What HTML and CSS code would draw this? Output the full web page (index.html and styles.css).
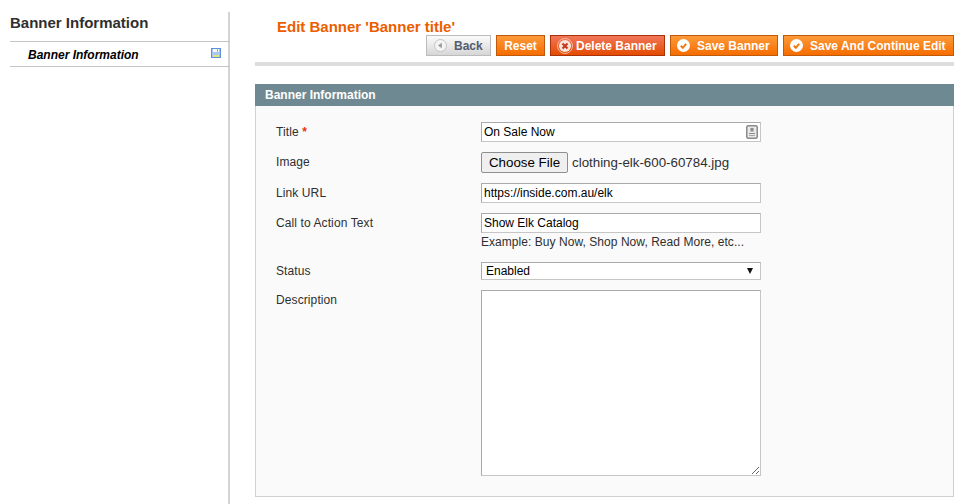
FILE: index.html

```html
<!DOCTYPE html>
<html lang="en">
<head>
  <meta charset="UTF-8">
  <title>Edit Banner</title>
  <link rel="stylesheet" href="styles.css">
</head>
<body>
  <div class="page">
    <aside class="side">
      <h3 class="side-title">Banner Information</h3>
      <div class="side-item">
        <span>Banner Information</span>
        <svg class="save-icon" width="10" height="10" viewBox="0 0 10 10">
          <rect x="0.5" y="0.5" width="9" height="9" fill="#a9c6ee" stroke="#5f8fd6"/>
          <rect x="2" y="1" width="6" height="3" fill="#f4f8fc"/>
          <rect x="6" y="1.5" width="1" height="2" fill="#5f8fd6"/>
          <rect x="2" y="7" width="6" height="2" fill="#dbe67e"/>
        </svg>
      </div>
    </aside>

    <main class="content">
      <div class="head">
        <h3 class="head-title">Edit Banner 'Banner title'</h3>
        <div class="actions">
          <button class="btn btn-back" type="button">
            <svg class="ico" width="13" height="13" viewBox="0 0 13 13">
              <circle cx="6.5" cy="6.5" r="6" fill="#f4f4f4" stroke="#c4c4c4"/>
              <path d="M7.8 3.8v5.4L4 6.5z" fill="#9a9a9a"/>
            </svg>
            <span>Back</span>
          </button>
          <button class="btn btn-orange btn-reset" type="button">Reset</button>
          <button class="btn btn-red" type="button">
            <svg class="ico" width="16" height="16" viewBox="0 0 16 16">
              <circle cx="8" cy="8" r="7.5" fill="none" stroke="#f7b9a0"/>
              <circle cx="8" cy="8" r="6" fill="#f8e6de"/>
              <path d="M5.5 5.5l5 5M10.5 5.5l-5 5" stroke="#c6391a" stroke-width="2.2"/>
            </svg>
            <span>Delete Banner</span>
          </button>
          <button class="btn btn-orange btn-save btn-save-short" type="button">
            <svg class="ico" width="13" height="13" viewBox="0 0 13 13">
              <circle cx="6.5" cy="6.5" r="6.5" fill="#fff"/>
              <path d="M3.8 6.8l2 2 3.4-4" fill="none" stroke="#f07a10" stroke-width="2"/>
            </svg>
            <span>Save Banner</span>
          </button>
          <button class="btn btn-orange btn-save btn-save-long" type="button">
            <svg class="ico" width="13" height="13" viewBox="0 0 13 13">
              <circle cx="6.5" cy="6.5" r="6.5" fill="#fff"/>
              <path d="M3.8 6.8l2 2 3.4-4" fill="none" stroke="#f07a10" stroke-width="2"/>
            </svg>
            <span>Save And Continue Edit</span>
          </button>
        </div>
      </div>

      <div class="section-head">Banner Information</div>
      <form class="fieldset">
        <div class="row row-title">
          <label>Title <span class="req">*</span></label>
          <div class="value input-wrap">
            <input class="text" type="text" value="On Sale Now">
            <svg class="field-icon" width="12" height="14" viewBox="0 0 12 14">
              <rect x="0.75" y="0.75" width="10.5" height="12.5" rx="1.5" fill="#e8e8e8" stroke="#8a8a8a" stroke-width="1.5"/>
              <rect x="4.5" y="3" width="3" height="3.5" fill="#8a8a8a"/>
              <rect x="3" y="8" width="6" height="1" fill="#8a8a8a"/>
              <rect x="3" y="10" width="6" height="1" fill="#a8a8a8"/>
            </svg>
          </div>
        </div>
        <div class="row row-image">
          <label>Image</label>
          <div class="value file">
            <button class="choose" type="button">Choose File</button>
            <span>clothing-elk-600-60784.jpg</span>
          </div>
        </div>
        <div class="row row-link">
          <label>Link URL</label>
          <div class="value"><input class="text" type="text" value="https://inside.com.au/elk"></div>
        </div>
        <div class="row row-cta">
          <label>Call to Action Text</label>
          <div class="value">
            <input class="text" type="text" value="Show Elk Catalog">
            <p class="note">Example: Buy Now, Shop Now, Read More, etc...</p>
          </div>
        </div>
        <div class="row row-status">
          <label class="label-status">Status</label>
          <div class="value select-wrap">
            <select class="select">
              <option>Enabled</option>
              <option>Disabled</option>
            </select>
          </div>
        </div>
        <div class="row">
          <label>Description</label>
          <div class="value"><textarea class="area"></textarea></div>
        </div>
      </form>
    </main>
  </div>
</body>
</html>
```

FILE: styles.css

```css
* {
  box-sizing: border-box;
}
body {
  margin: 0;
  background: #fff;
  color: #2f2f2f;
  font-family: "Liberation Sans", Arial, sans-serif;
  font-size: 12px;
  overflow: hidden;
}
.page {
  display: flex;
  height: 504px;
  padding-left: 10px;
}

/* left column */
.side {
  width: 220px;
  margin-top: 12px;
  border-right: 2px solid #d4d4d4;
}
.side-title {
  margin: 0;
  height: 30px;
  padding-top: 2px;
  border-bottom: 1px solid #c4c4c4;
  margin-right: -2px;
  font-size: 15px;
  line-height: 18px;
  color: #2f2f2f;
}
.side-item {
  display: flex;
  justify-content: space-between;
  height: 25px;
  padding: 5px 9px 0 18px;
  border-bottom: 1px solid #c4c4c4;
  margin-right: -2px;
  font-weight: bold;
  font-style: italic;
  line-height: 16px;
  color: #000;
}
.save-icon {
  margin-top: 1px;
}

/* main column */
.content {
  width: 699px;
  margin-left: 25px;
}
.head {
  height: 54px;
  margin-top: 12px;
  margin-bottom: 18px;
  border-bottom: 4px solid #ddd;
}
.head-title {
  margin: 0;
  padding: 6px 0 0 22px;
  font-size: 15px;
  line-height: 17px;
  color: #eb5e00;
}
.actions {
  display: flex;
  justify-content: flex-end;
  gap: 5px;
}
.btn {
  display: flex;
  align-items: center;
  height: 21px;
  padding: 0 7px;
  border: 1px solid #bf5a0a;
  background: linear-gradient(#fd9a3a, #f66c00);
  color: #fff;
  font: bold 12px "Liberation Sans", Arial, sans-serif;
}
.btn-back {
  width: 65px;
  padding: 0 0 0 7px;
  border-color: #bcbcbc;
  background: linear-gradient(#fbfbfb, #d6d6d6);
  color: #555d6e;
}
.btn-back .ico {
  margin-right: 7px;
}
.btn-reset {
  width: 49px;
  justify-content: center;
}
.btn-red {
  width: 115px;
  padding: 0 0 0 6px;
  border-color: #a93209;
  background: linear-gradient(#f1775a, #e44b00);
}
.btn-red .ico {
  margin-right: 3px;
}
.btn-save {
  padding: 0 0 0 6px;
}
.btn-save .ico {
  margin-right: 7px;
}
.btn-save-short {
  width: 108px;
}
.btn-save-long {
  width: 171px;
}

.section-head {
  height: 22px;
  padding-left: 10px;
  background: #6f8992;
  color: #fff;
  font-weight: bold;
  line-height: 22px;
}
.fieldset {
  height: 391px;
  padding-top: 16px;
  background: #fafafa;
  border: 1px solid #d0d0d0;
  border-top: 0;
}
.row {
  display: flex;
}
.row label {
  width: 225px;
  padding: 1px 0 0 20px;
  line-height: 18px;
  letter-spacing: 0.1px;
}
.row .label-status {
  padding-top: 0;
}
.req {
  color: #eb340a;
  font-weight: bold;
}
.value {
  width: 280px;
}
.input-wrap,
.select-wrap {
  position: relative;
}
.row-title {
  height: 30px;
}
.row-image {
  height: 31px;
}
.row-link {
  height: 30px;
}
.row-cta {
  height: 49px;
}
.row-status {
  height: 28px;
}
.text {
  display: block;
  width: 280px;
  height: 20px;
  padding: 0 2px;
  border: 1px solid;
  border-color: #aaa #c6c6c6 #c6c6c6 #aaa;
  background: #fff;
  color: #000;
  font: 12px "Liberation Sans", Arial, sans-serif;
}
.field-icon {
  position: absolute;
  top: 3px;
  right: 3px;
}
.file {
  display: flex;
  align-items: center;
  gap: 4px;
  height: 21px;
  font-size: 13.33px;
}
.choose {
  width: 87px;
  height: 21px;
  padding: 0;
  border: 1px solid #8f8f8f;
  border-radius: 2px;
  background: #efefef;
  color: #000;
  font: 13.33px "Liberation Sans", Arial, sans-serif;
}
.note {
  margin: 2px 0 0;
  line-height: 15px;
  letter-spacing: 0.05px;
}
.select {
  display: block;
  width: 280px;
  height: 18px;
  padding: 0 0 0 4px;
  border: 1px solid;
  border-color: #aaa #c6c6c6 #c6c6c6 #aaa;
  border-radius: 0;
  background: #fff;
  color: #000;
  font: 12px "Liberation Sans", Arial, sans-serif;
  appearance: none;
}
.select-wrap::after {
  content: "";
  position: absolute;
  top: 6px;
  right: 8px;
  border-top: 6px solid #111;
  border-left: 3px solid transparent;
  border-right: 3px solid transparent;
}
.area {
  display: block;
  width: 280px;
  height: 186px;
  border: 1px solid;
  border-color: #aaa #c6c6c6 #c6c6c6 #aaa;
  background: #fff;
}
```
